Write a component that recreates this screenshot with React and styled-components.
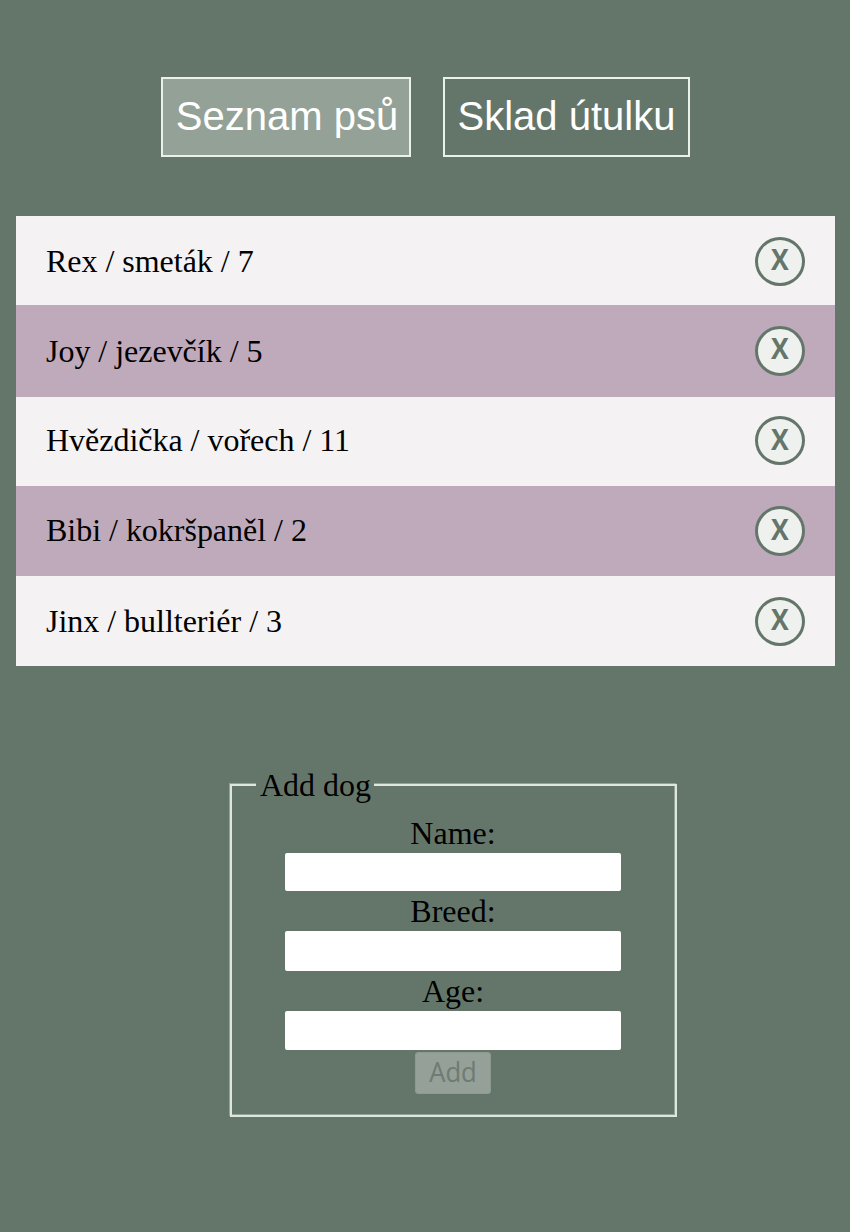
import React from "react";
import styled, { createGlobalStyle } from "styled-components";

const Global = createGlobalStyle`
  * { box-sizing: border-box; }
  body { margin: 0; background: #64766a; font-family: "Liberation Serif", "Times New Roman", serif; color: #000; }
`;
const Page = styled.main`
  min-height: 1232px;
  padding: 76.5px 15px 0 16px;
`;
const Nav = styled.nav`
  display: flex;
  justify-content: center;
  gap: 32px;
  margin-bottom: 59px;
`;
const Tab = styled.button`
  width: ${(p) => p.$width}px;
  height: 80.5px;
  padding: 0 0 2px ${(p) => (p.$active ? 2 : 0)}px;
  border: 2px solid #e9f1ea;
  background: ${(p) => (p.$active ? "#94a197" : "transparent")};
  color: #fff;
  font: 40px/74px "Liberation Sans", Arial, sans-serif;
  white-space: nowrap;
`;
const List = styled.ul`
  margin: 0;
  padding: 0;
  list-style: none;
`;
const Row = styled.li`
  display: flex;
  justify-content: space-between;
  height: ${(p) => p.$height}px;
  padding: ${(p) => p.$top}px 30px 0;
  font-size: 32px;
  background: #f4f2f3;
  &:nth-child(even) { background: #beaaba; }
`;
const Name = styled.span`
  line-height: ${(p) => p.$line}px;
  letter-spacing: -0.02px;
`;
const Remove = styled.button`
  flex: none;
  width: 50px;
  height: ${(p) => p.$size}px;
  padding: 0 0 5px;
  border: 3px solid #64766a;
  border-radius: 50%;
  background: #eff1ee;
  color: #64766a;
  font: bold 28px/1 "Open Sans", sans-serif;
`;
const Glyph = styled.span`
  display: block;
  transform: ${(p) => `translateY(${p.$shift || 0}px) scaleX(${p.$scale})`};
`;
const Form = styled.form`
  width: 447px;
  margin: 101px 0 0 214px;
`;
const Group = styled.fieldset`
  height: 350px;
  margin: 0;
  padding: 10px 25px 0 24px;
  border: 2px solid #dde7df;
  box-shadow: -1px -1px 0 #94a197, inset -1px -1px 0 #94a197;
  font-size: 32px;
`;
const Legend = styled.legend`
  padding: 0 3px 0 4px;
  background: #64766a;
  line-height: 36px;
`;
const Fields = styled.div`
  display: flex;
  flex-direction: column;
  align-items: center;
`;
const Label = styled.label`
  line-height: 40px;
`;
const Input = styled.input`
  width: 336px;
  height: ${(p) => p.$height}px;
  border: 0;
  border-radius: 2px;
  background: #fff;
`;
const Add = styled.button`
  width: 76px;
  height: 42px;
  padding: 0 0 2px;
  margin-top: 2px;
  border: 1px solid #8d9a91;
  border-radius: 3px;
  background: #94a098;
  color: #6f7b73;
  font: 27px/1 "Open Sans", sans-serif;
`;

const dogs = [
  { text: "Rex / smeták / 7", height: 89, top: 21, size: 49, shift: 0, line: 48 },
  { text: "Joy / jezevčík / 5", height: 92, top: 21, size: 50, shift: -1, line: 50 },
  { text: "Hvězdička / vořech / 11", height: 89, top: 19, size: 49, shift: 1, line: 49 },
  { text: "Bibi / kokršpaněl / 2", height: 90, top: 20, size: 50, shift: 0, line: 49 },
  { text: "Jinx / bullteriér / 3", height: 89.5, top: 21, size: 49, shift: 0, line: 48 },
];

const fields = [
  { name: "Name", height: 38 },
  { name: "Breed", height: 40 },
  { name: "Age", height: 39 },
];

export default function App() {
  return (
    <Page>
      <Global />
      <Nav>
        <Tab $active $width={250}>Seznam psů</Tab>
        <Tab $width={247}>Sklad útulku</Tab>
      </Nav>
      <List>
        {dogs.map((dog) => (
          <Row key={dog.text} $height={dog.height} $top={dog.top}>
            <Name $line={dog.line}>{dog.text}</Name>
            <Remove $size={dog.size}>
              <Glyph $scale={0.95} $shift={dog.shift}>X</Glyph>
            </Remove>
          </Row>
        ))}
      </List>
      <Form>
        <Group>
          <Legend>Add dog</Legend>
          <Fields>
            {fields.map(({ name, height }) => (
              <React.Fragment key={name}>
                <Label htmlFor={name}>{name}:</Label>
                <Input id={name} $height={height} />
              </React.Fragment>
            ))}
            <Add disabled>
              <Glyph $scale={0.95}>Add</Glyph>
            </Add>
          </Fields>
        </Group>
      </Form>
    </Page>
  );
}
